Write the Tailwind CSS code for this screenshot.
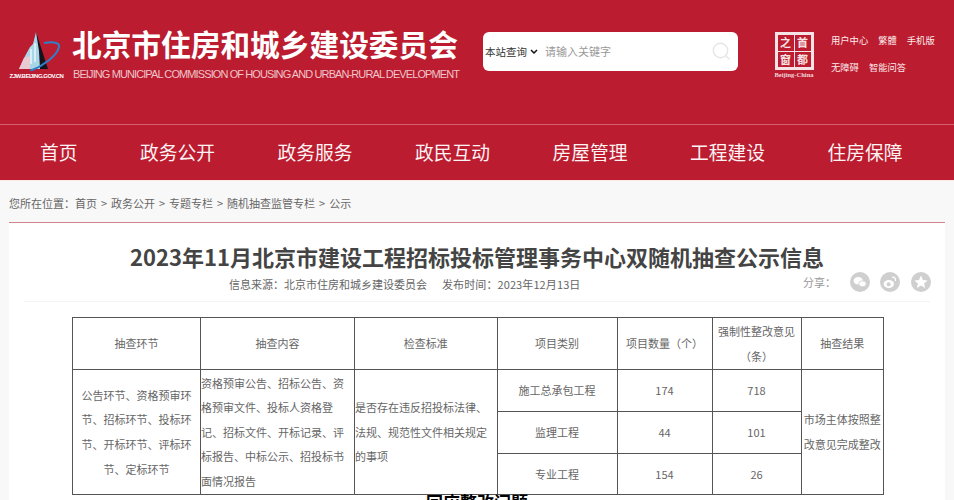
<!DOCTYPE html>
<html lang="zh-CN">
<head>
    <meta charset="UTF-8">
    <title>2023年11月北京市建设工程招标投标管理事务中心双随机抽查公示信息</title>
    <script src="https://cdn.jsdelivr.net/npm/@tailwindcss/browser@4"></script>
</head>
<body class="h-[500px] overflow-hidden bg-[#f8f8f8] text-[#666] [text-spacing-trim:space-all] font-['Noto_Sans_CJK_SC','Noto_Sans',sans-serif]">

    <!-- Red header -->
    <header class="bg-[#bb1c2f] h-[180px] text-white">
        <div class="h-[124px] flex">
            <!-- Logo -->
            <div class="ml-[9px] mt-[31px] w-[55px] flex flex-col items-center">
                <svg width="54" height="40" viewBox="0 0 54 40">
                    <path d="M26 1 L38 38 L26 38 Z" fill="#15131c"/>
                    <path d="M26 1 L29 20 L30 38 L9 38 L14 27 L20 16 L23 13 Z" fill="#a9d6e6"/>
                    <path d="M14 27 L20 25 L20 38 L9 38 Z" fill="#e9c9d2"/>
                    <path d="M25 12 L25 31 M21 18 L21 33" stroke="#e8f6fb" stroke-width="1.5"/>
                    <path d="M34 12 C44 10 50 12 49 16 C47 25 33 35 20 40" fill="none" stroke="#2f80c8" stroke-width="2"/>
                </svg>
                <span class="text-[6px] leading-[8px] mt-[1px] tracking-[-0.5px] font-['Liberation_Sans'] font-bold whitespace-nowrap">ZJW.BEIJING.GOV.CN</span>
            </div>
            <!-- Site name -->
            <div class="ml-[8px] mt-[24px] w-[386px]">
                <div class="text-[29.7px] leading-[40px] font-bold whitespace-nowrap">北京市住房和城乡建设委员会</div>
                <div class="ml-[1px] mt-[3px] text-[11px] leading-[14px] text-[#efc4ca] tracking-[-0.9px] font-['Liberation_Sans'] whitespace-nowrap">BEIJING MUNICIPAL COMMISSION OF HOUSING AND URBAN-RURAL DEVELOPMENT</div>
            </div>
            <!-- Search -->
            <div class="ml-[25px] mt-[32px] w-[255px] h-[39px] bg-white rounded-md flex items-center pl-[2px] pr-[6px] text-[11px]">
                <span class="text-[10.5px] text-[#333] whitespace-nowrap">本站查询</span>
                <svg class="ml-[3px]" width="8" height="6" viewBox="0 0 8 6"><path d="M1 1 L4 4 L7 1" fill="none" stroke="#111" stroke-width="1.5"/></svg>
                <span class="ml-[7px] text-[#999] whitespace-nowrap">请输入关键字</span>
                <svg class="ml-auto mr-[1px]" width="19" height="19" viewBox="0 0 19 19"><circle cx="8.5" cy="8.5" r="7.2" fill="none" stroke="#e6e6e6" stroke-width="1.4"/><path d="M13.8 13.8 L17.5 17.5" stroke="#e6e6e6" stroke-width="1.4"/></svg>
            </div>
            <!-- Capital window logo -->
            <div class="ml-[31px] mt-[32px] w-[50px] flex flex-col items-center">
                <div class="w-[39px] h-[38px] border-[3px] border-[#f6e3e5] grid grid-cols-2 grid-rows-2 gap-[1px] bg-[#f6e3e5] font-['Noto_Sans_CJK_SC',serif] font-bold text-[#f6e3e5] text-[11px] leading-none">
                    <span class="bg-[#bb1c2f] flex items-center justify-center">之</span>
                    <span class="bg-[#bb1c2f] flex items-center justify-center">首</span>
                    <span class="bg-[#bb1c2f] flex items-center justify-center">窗</span>
                    <span class="bg-[#bb1c2f] flex items-center justify-center">都</span>
                </div>
                <span class="text-[6.5px] leading-[8px] mt-[1px] font-['Liberation_Serif'] font-bold text-[#f3d6da] whitespace-nowrap">Beijing-China</span>
            </div>
            <!-- Top links -->
            <div class="ml-[12px] mt-[34px] text-[9.3px] leading-[12px] text-[#fbeaec] whitespace-nowrap">
                <div class="flex gap-[10px]"><span>用户中心</span><span>繁體</span><span>手机版</span></div>
                <div class="flex gap-[10px] mt-[15px]"><span>无障碍</span><span>智能问答</span></div>
            </div>
        </div>
        <!-- Nav -->
        <nav class="h-[56px] border-t border-[#d4606d] flex items-center pl-[40px] gap-[62.5px] text-[18.75px] text-[#fdf3f4] whitespace-nowrap">
            <a>首页</a><a>政务公开</a><a>政务服务</a><a>政民互动</a><a>房屋管理</a><a>工程建设</a><a>住房保障</a>
        </nav>
    </header>

    <!-- Breadcrumb -->
    <div class="h-[42px] border-t border-[#fde8ea] pl-[9px] pt-[14px] text-[11px] leading-[17px] [word-spacing:1.5px] whitespace-nowrap">您所在位置：首页 &gt; 政务公开 &gt; 专题专栏 &gt; 随机抽查监管专栏 &gt; 公示</div>

    <!-- Article card -->
    <main class="mx-[9px] h-[300px] bg-white border-t border-[#d0858e]">
        <h1 class="pt-[17px] text-center text-[22px] leading-[32px] font-bold text-[#444] whitespace-nowrap">2023年11月北京市建设工程招标投标管理事务中心双随机抽查公示信息</h1>
        <div class="mx-[15px] h-[30px] border-b border-[#f4f4f4] flex text-[11px] leading-[20px]">
            <div class="ml-[205px] mt-[2px] flex gap-[15px] whitespace-nowrap">
                <span>信息来源：北京市住房和城乡建设委员会</span><span class="tracking-[0.1px]">发布时间：2023年12月13日</span>
            </div>
            <div class="ml-auto flex items-center h-[20px] mr-[-1px] text-[#999] whitespace-nowrap">
                <span class="mr-[14px]">分享：</span>
                <svg width="20" height="20" viewBox="0 0 20 20"><circle cx="10" cy="10" r="10" fill="#cfcfcf"/><ellipse cx="8.2" cy="8.8" rx="4.6" ry="3.8" fill="#fff"/><ellipse cx="12.5" cy="11.8" rx="3.8" ry="3" fill="#fff" stroke="#cfcfcf" stroke-width=".8"/></svg>
                <svg class="ml-[10px]" width="20" height="20" viewBox="0 0 20 20"><circle cx="10" cy="10" r="10" fill="#cfcfcf"/><ellipse cx="8.8" cy="12" rx="5.2" ry="4" fill="#fff"/><circle cx="8.6" cy="12.2" r="2" fill="#cfcfcf"/><path d="M12 5.2 C14.5 4.8 16 6.5 15.4 9" fill="none" stroke="#fff" stroke-width="1.2"/></svg>
                <svg class="ml-[11px]" width="20" height="20" viewBox="0 0 20 20"><circle cx="10" cy="10" r="10" fill="#cfcfcf"/><path d="M10 3.5 L12 8 L16.6 8.4 L13.1 11.4 L14.2 16 L10 13.5 L5.8 16 L6.9 11.4 L3.4 8.4 L8 8 Z" fill="#fff"/></svg>
            </div>
        </div>

        <!-- Inspection table -->
        <table class="ml-[63px] mt-[15px] w-[811px] table-fixed border-collapse border border-[#555] text-[11px] leading-[24.6px] text-center">
            <colgroup>
                <col class="w-[128px]"><col class="w-[154px]"><col class="w-[142.5px]"><col class="w-[120px]"><col class="w-[95px]"><col class="w-[89px]"><col class="w-[82.5px]">
            </colgroup>
            <tbody>
                <tr class="h-[52px]">
                    <td class="border border-[#555]">抽查环节</td>
                    <td class="border border-[#555]">抽查内容</td>
                    <td class="border border-[#555]">检查标准</td>
                    <td class="border border-[#555]">项目类别</td>
                    <td class="border border-[#555]">项目数量（个）</td>
                    <td class="border border-[#555]">强制性整改意见（条）</td>
                    <td class="border border-[#555]">抽查结果</td>
                </tr>
                <tr class="h-[42px]">
                    <td rowspan="3" class="border border-[#555] px-[8px]">公告环节、资格预审环节、招标环节、投标环节、开标环节、评标环节、定标环节</td>
                    <td rowspan="3" class="border border-[#555] text-left">资格预审公告、招标公告、资格预审文件、投标人资格登记、招标文件、开标记录、评标报告、中标公示、招投标书面情况报告</td>
                    <td rowspan="3" class="border border-[#555] text-left">是否存在违反招投标法律、法规、规范性文件相关规定的事项</td>
                    <td class="border border-[#555]">施工总承包工程</td>
                    <td class="border border-[#555]">174</td>
                    <td class="border border-[#555]">718</td>
                    <td rowspan="3" class="border border-[#555] px-[2px]">市场主体按照整改意见完成整改</td>
                </tr>
                <tr class="h-[42px]">
                    <td class="border border-[#555]">监理工程</td>
                    <td class="border border-[#555]">44</td>
                    <td class="border border-[#555]">101</td>
                </tr>
                <tr class="h-[41px]">
                    <td class="border border-[#555]">专业工程</td>
                    <td class="border border-[#555]">154</td>
                    <td class="border border-[#555]">26</td>
                </tr>
            </tbody>
        </table>
        <p class="text-center text-[17px] leading-[14px] font-bold text-black whitespace-nowrap">回应整改问题</p>
    </main>
</body>
</html>
